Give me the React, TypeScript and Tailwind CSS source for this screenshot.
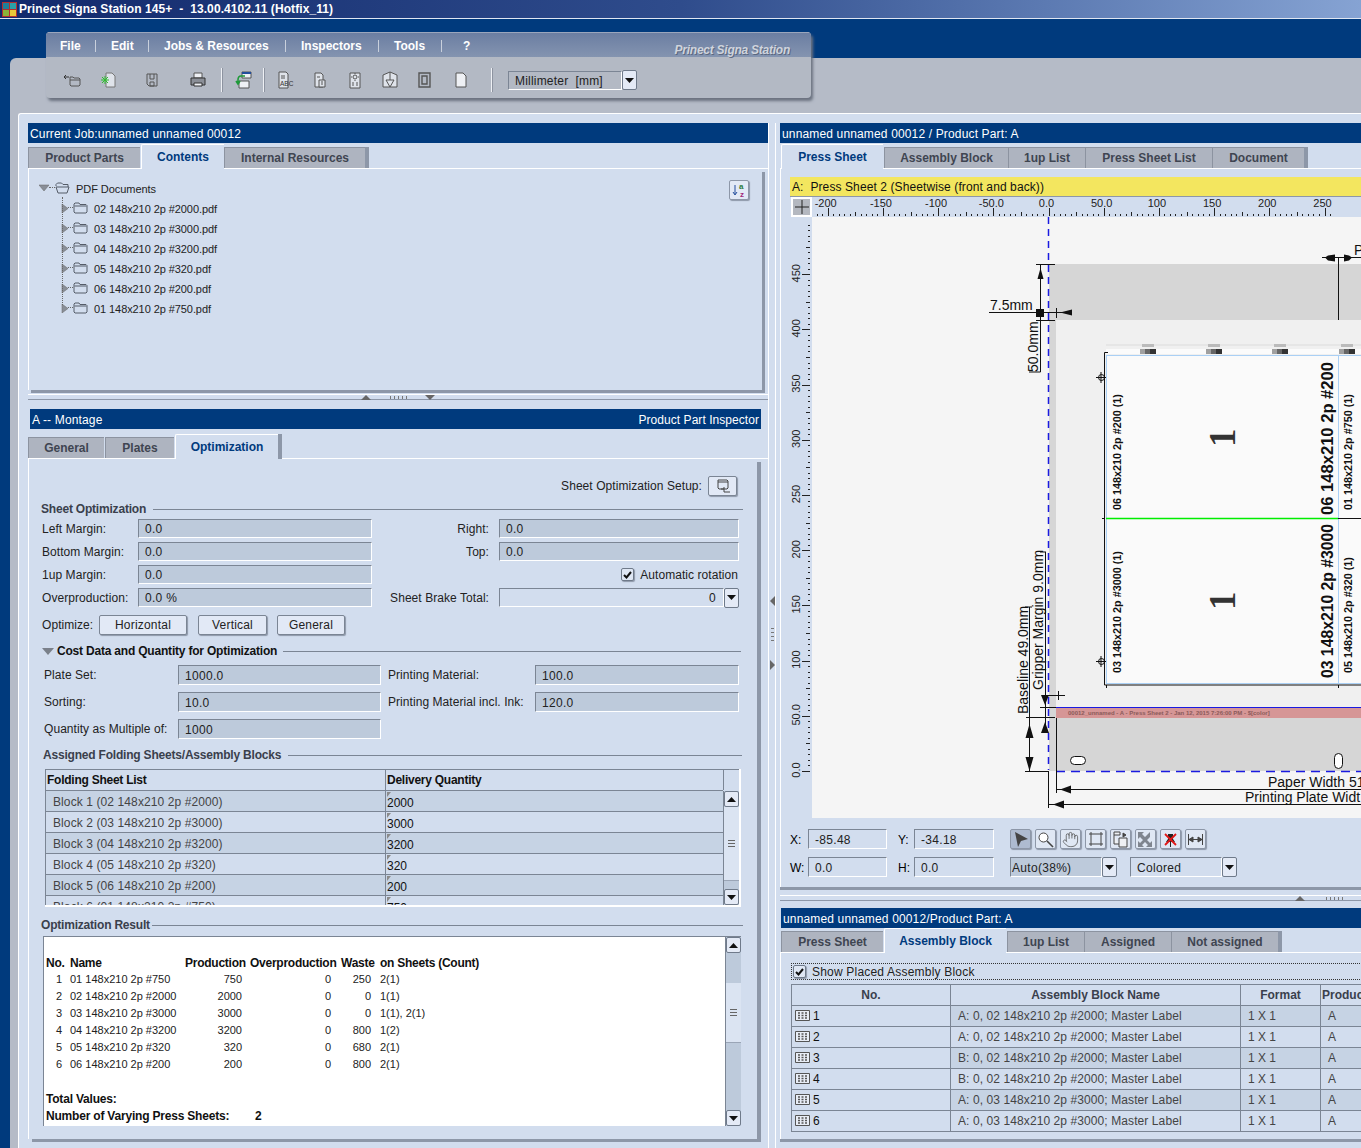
import { Hand } from "lucide-react";
import type { ReactNode } from "react";

const docs = [
  "02 148x210 2p #2000.pdf",
  "03 148x210 2p #3000.pdf",
  "04 148x210 2p #3200.pdf",
  "05 148x210 2p #320.pdf",
  "06 148x210 2p #200.pdf",
  "01 148x210 2p #750.pdf",
];

const blocks = [
  ["Block 1 (02 148x210 2p #2000)", "2000"],
  ["Block 2 (03 148x210 2p #3000)", "3000"],
  ["Block 3 (04 148x210 2p #3200)", "3200"],
  ["Block 4 (05 148x210 2p #320)", "320"],
  ["Block 5 (06 148x210 2p #200)", "200"],
  ["Block 6 (01 148x210 2p #750)", "750"],
];

const results = [
  ["1", "01 148x210 2p #750", "750", "0", "250", "2(1)"],
  ["2", "02 148x210 2p #2000", "2000", "0", "0", "1(1)"],
  ["3", "03 148x210 2p #3000", "3000", "0", "0", "1(1), 2(1)"],
  ["4", "04 148x210 2p #3200", "3200", "0", "800", "1(2)"],
  ["5", "05 148x210 2p #320", "320", "0", "680", "2(1)"],
  ["6", "06 148x210 2p #200", "200", "0", "800", "2(1)"],
];

const assembly = [
  ["1", "A: 0, 02 148x210 2p #2000; Master Label"],
  ["2", "A: 0, 02 148x210 2p #2000; Master Label"],
  ["3", "B: 0, 02 148x210 2p #2000; Master Label"],
  ["4", "B: 0, 02 148x210 2p #2000; Master Label"],
  ["5", "A: 0, 03 148x210 2p #3000; Master Label"],
  ["6", "A: 0, 03 148x210 2p #3000; Master Label"],
];

const Header = ({ className, children }: { className: string; children: ReactNode }) => (
  <div className={`h-[20px] pt-px bg-[#003a7d] text-white flex items-center justify-between px-[2px] tracking-[0.15px] ${className}`}>
    {children}
  </div>
);

const Tab = ({ label, active, last, className }: { label: string; active?: boolean; last?: boolean; className: string }) => (
  <div
    className={`shrink-0 flex items-center justify-center font-bold ${className} ${
      active
        ? "h-[25px] -mb-px bg-[#d2ddee] text-[#003a7d] border-t border-l border-white rounded-tl-[2px] relative z-10"
        : "h-[21px] bg-[#aeb4c0] text-[#3f4551] border-t border-l border-[#8c93a0]"
    } ${last ? "shadow-[4px_0_0_#8d97a8] mr-[4px]" : ""}`}
  >
    {label}
  </div>
);

const Field = ({ className, children }: { className: string; children?: ReactNode }) => (
  <div className={`h-[20px] pt-px flex items-center pl-[6px] bg-[#bdcadb] border border-t-[#7b8594] border-l-[#7b8594] border-r-white border-b-white tracking-[0.3px] text-[#222] ${className}`}>
    {children}
  </div>
);

const PlainField = ({ className, children }: { className: string; children?: ReactNode }) => (
  <div className={`h-[20px] pt-px flex items-center pl-[6px] border border-t-[#7b8594] border-l-[#7b8594] border-r-white border-b-white tracking-[0.3px] text-[#222] ${className}`}>
    {children}
  </div>
);

const DropBtn = () => (
  <div className="w-[15px] h-[20px] shrink-0 flex items-center justify-center bg-[#e4eaf6] border border-[#6f7a8a] rounded-[2px]">
    <svg width="9" height="5" viewBox="0 0 9 5">
      <path d="M0 0h9L4.5 5z" fill="#111" />
    </svg>
  </div>
);

const Btn = ({ className, children }: { className: string; children: ReactNode }) => (
  <div className={`h-[20px] flex items-center justify-center bg-[#e2e9f6] border border-[#7b8594] rounded-[2px] shadow-[1px_1px_1px_#8d97a8] tracking-[0.2px] text-[#222] ${className}`}>
    {children}
  </div>
);

const Check = () => (
  <div className="w-[13px] h-[13px] shrink-0 flex items-center justify-center bg-[#dfe7f4] border border-[#6f7a8a] rounded-[2px] shadow-[1px_1px_1px_#8d97a8]">
    <svg width="9" height="8" viewBox="0 0 9 8">
      <path d="M1 4l2.5 2.5L8 1" fill="none" stroke="#111" strokeWidth="2" />
    </svg>
  </div>
);

const Section = ({ className, line, children }: { className: string; line: string; children: ReactNode }) => (
  <div className={`h-[14px] flex items-center font-bold text-[#3a404c] tracking-[-0.2px] whitespace-nowrap ${className}`}>
    {children}
    <div className={`h-px bg-[#7b8594] ml-auto ${line}`} />
  </div>
);

const Folder = ({ open }: { open?: boolean }) => (
  <svg width="15" height="12" viewBox="0 0 15 12" className="shrink-0 -mt-[3px]">
    <path
      d={open ? "M1 4V2.5L2.5 1h4L8 2.5h5V5M1 5h10l3 0-2 6H3z" : "M1 3V2l1-1h4l1 1.5h6l1 1V10l-1 1H2l-1-1z"}
      fill="none"
      stroke="#555c68"
      strokeWidth="1"
    />
    {!open && <path d="M1.5 4h12" stroke="#555c68" strokeWidth="1" />}
  </svg>
);

const Tri = ({ dir }: { dir: "right" | "down" }) => (
  <svg width="10" height="9" viewBox="0 0 10 9" className="shrink-0 -mt-[2px]">
    <path d={dir === "down" ? "M0 1h10L5 7z" : "M1 0l6 4.5L1 9z"} fill="#8a8f98" stroke="#666" strokeWidth="0.5" />
  </svg>
);

const ToolIcon = ({ className, children }: { className: string; children: ReactNode }) => (
  <svg width="20" height="20" viewBox="0 0 20 20" className={`shrink-0 ${className}`} fill="none" stroke="#555" strokeWidth="1">
    {children}
  </svg>
);

const Sep = ({ className }: { className: string }) => <div className={`w-[2px] h-[24px] shrink-0 bg-[#eef0f4] border-r border-[#8d93a0] ${className}`} />;

const Toolbar = () => (
  <div className="absolute left-[46px] top-[32px] w-[765px] h-[66px] rounded-[4px] overflow-hidden shadow-[2px_3px_3px_#6b7280] bg-[#b3b9c4] z-20">
    <div className="relative h-[25px] pt-[2px] bg-gradient-to-b from-[#6b7ea2] to-[#8494b0] flex items-center text-white font-bold border-t border-[#9aa6bd]">
      <div className="w-[50px] pl-[14px] border-r border-[#c9d0dc]">File</div>
      <div className="w-[53px] pl-[15px] border-r border-[#c9d0dc]">Edit</div>
      <div className="w-[137px] pl-[15px] border-r border-[#c9d0dc]">Jobs &amp; Resources</div>
      <div className="w-[93px] pl-[15px] border-r border-[#c9d0dc]">Inspectors</div>
      <div className="w-[63px] pl-[15px] border-r border-[#c9d0dc]">Tools</div>
      <div className="pl-[21px]">?</div>
      <div className="ml-auto mr-[21px] mt-[8px] italic tracking-[-0.25px] text-[#cfd4dd] [text-shadow:1px_1px_0_#5b6880]">Prinect Signa Station</div>
    </div>
    <div className="h-[41px] flex items-center pt-[5px]">
      <ToolIcon className="ml-[16px]">
        <path d="M8 7h3l1 1h5l1 1v6l-1 1H9l-1-1zM8 10h10" />
        <path d="M2 7h5M2 7l2-2M2 7l2 2" stroke="#333" />
      </ToolIcon>
      <ToolIcon className="ml-[16px]">
        <path d="M8 3h6l3 3v11H8z" stroke="#777" fill="#dfe3ea" />
        <path d="M7 6v8M3 10h8M4 7l6 6M10 7l-6 6" stroke="#2fc02f" />
      </ToolIcon>
      <ToolIcon className="ml-[24px]">
        <path d="M5 4h10v12H7l-2-2zM8 4v5h4V4M8 12h4v4H8z" />
      </ToolIcon>
      <ToolIcon className="ml-[26px]">
        <path d="M6 3h8v5H6z" fill="#eef0f4" />
        <path d="M3 8h14v7H3z" fill="#8b8f97" stroke="#333" />
        <path d="M6 13h8v3H6z" fill="#eef0f4" stroke="#333" />
      </ToolIcon>
      <Sep className="ml-[13px]" />
      <ToolIcon className="ml-[11px]">
        <path d="M8 2h9v6H8z" fill="#eef0f4" />
        <path d="M8 3h9" stroke="#224d9c" strokeWidth="2" />
        <path d="M5 11h10v7H5z" fill="#eef0f4" />
        <path d="M11 6H7Q4 6 4 10v3M2 11l2 3 2-3" stroke="#1f9a3a" strokeWidth="1.6" />
      </ToolIcon>
      <Sep className="ml-[9px]" />
      <ToolIcon className="ml-[12px]">
        <path d="M2 2h7l2 2v14H2z" fill="#dfe3ea" />
        <path d="M4 6h4M4 8h4" />
        <text x="3" y="15.5" fontSize="6.5" stroke="none" fill="#333" fontFamily="Liberation Sans">ABC</text>
      </ToolIcon>
      <ToolIcon className="ml-[13px]">
        <path d="M5 3h6l2 2v12H5z" fill="#dfe3ea" />
        <path d="M7 7h3M9 10h6v7H9z" fill="#dfe3ea" />
        <path d="M11 12h2M11 14h2" />
      </ToolIcon>
      <ToolIcon className="ml-[15px]">
        <path d="M5 3h10v15H5z" fill="#dfe3ea" />
        <circle cx="10" cy="7" r="2" />
        <path d="M10 3v1M10 10v1M6 7h1M13 7h1M7 13h2M11 13h2M7 15h2M11 15h2" />
      </ToolIcon>
      <ToolIcon className="ml-[15px]">
        <path d="M3 5l7-3 7 3v12H3z" fill="#dfe3ea" />
        <path d="M10 2v8M6 10h8l-4 7z" />
      </ToolIcon>
      <ToolIcon className="ml-[15px]">
        <path d="M4 3h11v14H4zM7 6h5v8H7z" strokeWidth="1.4" />
      </ToolIcon>
      <ToolIcon className="ml-[16px]">
        <path d="M5 3h7l3 3v11H5z" fill="#eef0f4" />
      </ToolIcon>
      <Sep className="ml-[20px]" />
      <div className="ml-[15px] flex items-center">
        <Field className="w-[114px] !pl-[6px] !tracking-[0.2px] !h-[19px] !bg-[#b3b9c4]">Millimeter&nbsp; [mm]</Field>
        <DropBtn />
      </div>
    </div>
  </div>
);

const SortIcon = () => (
  <div className="absolute left-[700px] top-[11px] w-[20px] h-[20px] bg-[#e2e9f6] border border-[#8d97a8] rounded-[2px] shadow-[1px_1px_1px_#8d97a8]">
    <svg width="18" height="18" viewBox="0 0 18 18">
      <path d="M5 4v9M3 11l2 3 2-3" fill="none" stroke="#224d9c" />
      <text x="9" y="8" fontSize="8" fontWeight="bold" fill="#2c7a3c" fontFamily="Liberation Sans">a</text>
      <text x="10" y="16" fontSize="8" fontWeight="bold" fill="#a02a7a" fontFamily="Liberation Sans">z</text>
    </svg>
  </div>
);

const TreePanel = () => (
  <div className="relative h-[221px] w-[734px] bg-[#d2ddee] border-l border-white shadow-[3px_3px_0_#8d97a8]">
    <SortIcon />
    <div className="absolute left-[33px] top-[28px] w-0 h-[108px] border-l border-dotted border-[#666]" />
    <div className="pt-[10px] pl-[10px]">
      <div className="h-[20px] flex items-center">
        <Tri dir="down" />
        <span className="w-[6px] -mt-[3px] border-t border-dotted border-[#666]" />
        <Folder open />
        <span className="ml-[6px] text-[11px] tracking-[-0.05px] text-[#222]">PDF Documents</span>
      </div>
      {docs.map((d) => (
        <div key={d} className="h-[20px] flex items-center pl-[22px]">
          <Tri dir="right" />
          <span className="w-[5px] -ml-[3px] -mt-[3px] border-t border-dotted border-[#666]" />
          <Folder />
          <span className="ml-[6px] text-[11px] tracking-[-0.08px] text-[#222]">{d}</span>
        </div>
      ))}
    </div>
  </div>
);

const HSplit = ({ className, children }: { className: string; children: ReactNode }) => (
  <div className={`relative border-t border-white border-b border-b-[#8d97a8] ${className}`}>{children}</div>
);

const Grip = ({ className }: { className: string }) => <div className={`absolute h-[3px] border-l-[2px] border-r-[2px] bg-[repeating-linear-gradient(90deg,#777_0_1px,transparent_1px_4px)] border-transparent ${className}`} />;

const FormLabel = ({ className, children }: { className: string; children: ReactNode }) => (
  <div className={`tracking-[0.06px] text-[#222] whitespace-nowrap ${className}`}>{children}</div>
);

const SheetForm = () => (
  <div className="ml-[13px] grid grid-cols-[96px_234px_127px_240px] auto-rows-[19px] gap-y-[4px] mt-[3px] items-center">
    <FormLabel className="">Left Margin:</FormLabel>
    <Field className="!h-[19px]">0.0</Field>
    <FormLabel className="text-right pr-[10px]">Right:</FormLabel>
    <Field className="!h-[19px]">0.0</Field>
    <FormLabel className="">Bottom Margin:</FormLabel>
    <Field className="!h-[19px]">0.0</Field>
    <FormLabel className="text-right pr-[10px]">Top:</FormLabel>
    <Field className="!h-[19px]">0.0</Field>
    <FormLabel className="">1up Margin:</FormLabel>
    <Field className="!h-[19px]">0.0</Field>
    <div className="col-span-2 flex items-center justify-end gap-[6px] pr-[1px]">
      <Check />
      <FormLabel className="">Automatic rotation</FormLabel>
    </div>
    <FormLabel className="">Overproduction:</FormLabel>
    <Field className="!h-[19px]">0.0 %</Field>
    <FormLabel className="text-right pr-[10px]">Sheet Brake Total:</FormLabel>
    <div className="flex">
      <PlainField className="flex-1 !h-[19px] justify-end pr-[7px]">0</PlainField>
      <DropBtn />
    </div>
  </div>
);

const CostForm = () => (
  <div className="ml-[15px] mt-[7px] grid grid-cols-[134px_203px_7px_147px_204px] auto-rows-[20px] gap-y-[7px] items-center">
    <FormLabel className="">Plate Set:</FormLabel>
    <Field className="">1000.0</Field>
    <div />
    <FormLabel className="">Printing Material:</FormLabel>
    <Field className="">100.0</Field>
    <FormLabel className="">Sorting:</FormLabel>
    <Field className="">10.0</Field>
    <div />
    <FormLabel className="">Printing Material incl. Ink:</FormLabel>
    <Field className="">120.0</Field>
    <FormLabel className="">Quantity as Multiple of:</FormLabel>
    <Field className="">1000</Field>
  </div>
);

const ScrollBar = ({ thumb, rest }: { thumb: string; rest: string }) => (
  <div className="w-full h-full flex flex-col bg-[#bdcadb] border-l border-[#7b8594]">
    <div className="h-[16px] shrink-0 flex items-center justify-center bg-[#e4eaf6] border border-[#6f7a8a] rounded-[2px]">
      <svg width="9" height="5" viewBox="0 0 9 5"><path d="M4.5 0L9 5H0z" fill="#111" /></svg>
    </div>
    <div className={`shrink-0 flex flex-col items-center justify-center gap-[2px] bg-[#dbe4f2] border-b border-[#9aa5b6] ${thumb}`}>
      <div className="w-[7px] h-px bg-[#666]" />
      <div className="w-[7px] h-px bg-[#666]" />
      <div className="w-[7px] h-px bg-[#666]" />
    </div>
    <div className={rest} />
    <div className="h-[16px] shrink-0 flex items-center justify-center bg-[#e4eaf6] border border-[#6f7a8a] rounded-[2px]">
      <svg width="9" height="5" viewBox="0 0 9 5"><path d="M0 0h9L4.5 5z" fill="#111" /></svg>
    </div>
  </div>
);

const FoldingTable = () => (
  <div className="ml-[16px] mt-[7px] w-[696px] h-[138px] border-r-2 border-b-2 border-white flex overflow-hidden">
    <div className="w-[678px] shrink-0 border-l border-t border-[#7b8594]">
      <div className="h-[21px] grid grid-cols-[340px_338px] font-bold text-[#111] border-b border-[#7b8594] tracking-[-0.25px]">
        <div className="pl-[1px] flex items-center border-r border-[#7b8594]">Folding Sheet List</div>
        <div className="pl-[1px] flex items-center border-r border-[#7b8594]">Delivery Quantity</div>
      </div>
      {blocks.map(([name, qty], i) => (
        <div key={name} className={`h-[21px] grid grid-cols-[340px_338px] border-b border-[#7b8594] ${i % 2 === 0 ? "bg-[#c6d3e4]" : ""}`}>
          <div className="pl-[7px] pt-px flex items-center tracking-[0.1px] text-[#444] border-r border-[#7b8594]">{name}</div>
          <div className="relative pl-[1px] pt-[3px] flex items-center text-[#111] border-r border-[#7b8594]">
            <svg width="4" height="5" viewBox="0 0 4 5" className="absolute left-[1px] top-[1px]"><path d="M0 0h4L0 5z" fill="#8a8a8a" /></svg>
            {qty}
          </div>
        </div>
      ))}
    </div>
    <div className="flex-1 flex flex-col pt-[21px] border-t border-[#7b8594]">
      <ScrollBar thumb="h-[74px]" rest="flex-1" />
    </div>
  </div>
);

const ResultRowGrid = "grid grid-cols-[24px_115px_61px_90px_40px_1fr] h-[17px] items-center text-[#222] whitespace-nowrap";

const ResultBox = () => (
  <div className="ml-[14px] mt-[4px] w-[698px] h-[190px] bg-white border-l border-t border-[#7b8594] flex overflow-hidden">
    <div className="flex-1 pt-[17px] pl-[2px]">
      <div className={`${ResultRowGrid} font-bold !text-[#111] tracking-[-0.25px]`}>
        <div>No.</div>
        <div>Name</div>
        <div>Production</div>
        <div className="pl-[4px]">Overproduction</div>
        <div className="pl-[5px]">Waste</div>
        <div className="pl-[4px]">on Sheets (Count)</div>
      </div>
      {results.map((r) => (
        <div key={r[0]} className={`${ResultRowGrid} text-[11px]`}>
          <div className="text-right pr-[8px]">{r[0]}</div>
          <div>{r[1]}</div>
          <div className="text-right pr-[4px]">{r[2]}</div>
          <div className="text-right pr-[5px]">{r[3]}</div>
          <div className="text-right pr-[5px]">{r[4]}</div>
          <div className="pl-[4px]">{r[5]}</div>
        </div>
      ))}
      <div className="h-[17px]" />
      <div className="h-[17px] flex items-center font-bold text-[#111] tracking-[-0.2px]">Total Values:</div>
      <div className="h-[17px] flex items-center font-bold text-[#111] tracking-[-0.2px]">
        <span className="w-[209px]">Number of Varying Press Sheets:</span>
        <span>2</span>
      </div>
    </div>
    <div className="w-[16px] shrink-0">
      <ScrollBar thumb="h-[60px] mt-[30px]" rest="flex-1" />
    </div>
  </div>
);

const LeftColumn = () => (
  <div className="w-[740px] ml-[9px] shrink-0">
    <Header className="">
      <span>Current Job:unnamed unnamed 00012</span>
    </Header>
    <div className="h-[26px] flex items-end border-b border-white">
      <Tab label="Product Parts" className="w-[112px]" />
      <Tab label="Contents" active className="w-[83px] ml-px" />
      <Tab label="Internal Resources" last className="w-[141px]" />
    </div>
    <TreePanel />
    <HSplit className="h-[6px] mt-[4px]">
      <svg width="10" height="5" viewBox="0 0 10 5" className="absolute left-[333px] top-0"><path d="M5 0l5 5H0z" fill="#666" /></svg>
      <Grip className="left-[360px] top-[1px] w-[20px]" />
      <svg width="10" height="5" viewBox="0 0 10 5" className="absolute left-[397px] top-0"><path d="M0 0h10L5 5z" fill="#666" /></svg>
    </HSplit>
    <Header className="mt-[9px] ml-[2px] w-[731px]">
      <span>A -- Montage</span>
      <span className="tracking-[0.05px]">Product Part Inspector</span>
    </Header>
    <div className="h-[30px] flex items-end border-b border-white">
      <Tab label="General" className="w-[76px]" />
      <Tab label="Plates" className="w-[69px] ml-px" />
      <Tab label="Optimization" active last className="w-[103px] ml-px" />
    </div>
    <div className="w-[729px] h-[680px] bg-[#d2ddee] border-l border-white shadow-[4px_3px_0_#8d97a8]">
      <div className="mt-0 pt-[17px] h-[37px] flex items-center justify-end pr-[20px] gap-[6px]">
        <FormLabel className="">Sheet Optimization Setup:</FormLabel>
        <Btn className="w-[29px]">
          <svg width="18" height="16" viewBox="0 0 18 16" fill="none" stroke="#444">
            <path d="M4 2h9l1 1v7l-1 1H5l-1-1zM4 4h10M10 9v5M7 11h3M10 14h6" />
          </svg>
        </Btn>
      </div>
      <Section className="ml-[12px] mt-[6px] w-[702px]" line="w-[590px]">Sheet Optimization</Section>
      <SheetForm />
      <div className="ml-[13px] mt-[8px] h-[20px] flex items-center">
        <FormLabel className="w-[57px]">Optimize:</FormLabel>
        <Btn className="w-[88px]">Horizontal</Btn>
        <Btn className="w-[69px] ml-[11px]">Vertical</Btn>
        <Btn className="w-[68px] ml-[10px]">General</Btn>
      </div>
      <Section className="ml-[13px] mt-[9px] w-[699px] !text-[#111]" line="w-[458px]">
        <svg width="12" height="7" viewBox="0 0 12 7" className="mr-[3px]"><path d="M0 0h12L6 7z" fill="#7a808a" /></svg>
        Cost Data and Quantity for Optimization
      </Section>
      <CostForm />
      <Section className="ml-[14px] mt-[9px] w-[699px]" line="w-[454px]">Assigned Folding Sheets/Assembly Blocks</Section>
      <FoldingTable />
      <Section className="ml-[12px] mt-[11px] w-[702px]" line="w-[591px]">Optimization Result</Section>
      <ResultBox />
    </div>
  </div>
);

const VSplit = () => (
  <div className="relative w-[12px] shrink-0 border-l border-white">
    <svg width="5" height="10" viewBox="0 0 5 10" className="absolute left-[1px] top-[473px]"><path d="M5 0v10L0 5z" fill="#666" /></svg>
    <div className="absolute left-[2px] top-[502px] w-[3px] h-[16px] bg-[repeating-linear-gradient(0deg,#777_0_1px,transparent_1px_4px)]" />
    <svg width="5" height="10" viewBox="0 0 5 10" className="absolute left-[1px] top-[537px]"><path d="M0 0v10l5-5z" fill="#666" /></svg>
    <div className="absolute left-[6px] top-0 bottom-0 w-px bg-white" />
  </div>
);

const major = [-200, -150, -100, -50, 0, 50, 100, 150, 200, 250];
const hLabels = ["-200", "-150", "-100", "-50.0", "0.0", "50.0", "100", "150", "200", "250"];
const vLabels = ["0.0", "50.0", "100", "150", "200", "250", "300", "350", "400", "450"];
const hTicks = Array.from({ length: 100 }, (_, i) => i - 48);
const vTicks = Array.from({ length: 100 }, (_, i) => i);

const HRuler = () => (
  <svg width="549" height="20" viewBox="812 197 549 20" className="shrink-0 block">
    {hTicks.map((n) => {
      const x = Math.round(1048.5 + n * 5.52) + 0.5;
      const h = n % 10 === 0 ? 8 : n % 5 === 0 ? 4 : 2;
      return <line key={n} x1={x} x2={x} y1={216} y2={216 - h} stroke="#222" />;
    })}
    {major.map((m, i) => (
      <text key={m} x={1048.5 + m * 1.104 - 2} y={207} textAnchor="middle" fontSize="11" fill="#222" fontFamily="Liberation Sans">
        {hLabels[i]}
      </text>
    ))}
  </svg>
);

const VRuler = () => (
  <svg width="21" height="601" viewBox="791 217 21 601" className="shrink-0 block">
    {vTicks.map((n) => {
      const y = Math.round(771 - n * 5.52) + 0.5;
      const w = n % 10 === 0 ? 8 : n % 5 === 0 ? 4 : 2;
      return <line key={n} x1={810} x2={810 - w} y1={y} y2={y} stroke="#222" />;
    })}
    {vLabels.map((l, i) => {
      const y = 771 - i * 55.2 - 1;
      return (
        <text key={l} x={800} y={y} transform={`rotate(-90 800 ${y})`} textAnchor="middle" fontSize="11" fill="#222" fontFamily="Liberation Sans">
          {l}
        </text>
      );
    })}
  </svg>
);

const VText = ({ x, y, size, bold, fit, children }: { x: number; y: number; size: number; bold?: boolean; fit?: number; children: string }) => (
  <text
    x={x}
    y={y}
    transform={`rotate(-90 ${x} ${y})`}
    fontSize={size}
    fontWeight={bold ? "bold" : "normal"}
    fill="#111"
    stroke="none"
    fontFamily="Liberation Sans"
    textLength={fit}
    lengthAdjust={fit ? "spacingAndGlyphs" : undefined}
  >
    {children}
  </text>
);

const marks = [1140, 1206, 1272, 1339];

const Sheet = () => (
  <svg width="549" height="601" viewBox="812 217 549 601" className="shrink-0 block bg-[#f5f5f5]">
    {/* paper */}
    <rect x="1049" y="264" width="320" height="56" fill="#d6d6d6" />
    <rect x="1049" y="320" width="7" height="451" fill="#d6d6d6" />
    <rect x="1056" y="320" width="310" height="387" fill="#f0f0f0" />
    <rect x="1056" y="718" width="310" height="53" fill="#d6d6d6" />
    <rect x="1056" y="707" width="310" height="11" fill="#d69696" />
    <line x1="1056" x2="1361" y1="707.5" y2="707.5" stroke="#1a1ae0" />
    <text x="1068" y="715" fontSize="6" fill="#8a5a5a" fontFamily="Liberation Sans" fontWeight="bold">00012_unnamed - A  - Press Sheet 2 - Jan 12, 2015 7:26:00 PM - $[color]</text>
    {/* color bar */}
    <rect x="1106" y="349" width="255" height="5" fill="#fbfbfb" />
    <rect x="1106" y="344" width="255" height="2" fill="#e6e6e6" />
    {marks.map((x) => (
      <g key={x}>
        <rect x={x} y="349" width="6" height="5" fill="#a0a0a0" />
        <rect x={x + 5} y="349" width="6" height="5" fill="#666" />
        <rect x={x + 10} y="349" width="6" height="5" fill="#333" />
        <rect x={x + 2} y="344" width="12" height="3" fill="#bbb" />
      </g>
    ))}
    {/* 1ups */}
    <rect x="1106.5" y="355.5" width="270" height="328" fill="#fafafa" stroke="#aad0f5" />
    <line x1="1338.5" x2="1338.5" y1="355" y2="683" stroke="#aad0f5" />
    <line x1="1106" x2="1338" y1="518.5" y2="518.5" stroke="#00ee00" strokeWidth="1.4" />
    <line x1="1338" x2="1361" y1="518.5" y2="518.5" stroke="#111" />
    <path d="M1108 352.5h-3.5v332.5H1361M1102 518.5h3M1106.5 685v3M1338.5 685v3" fill="none" stroke="#111" />
    <path d="M1096 377.5h10M1101 372v11M1096 661.5h10M1101 656v11" stroke="#111" fill="none" />
    <circle cx="1101.5" cy="377.5" r="3" fill="none" stroke="#111" />
    <circle cx="1101.5" cy="661.5" r="3" fill="none" stroke="#111" />
    <VText x={1121} y={510} size={10.8} bold>06 148x210 2p #200 (1)</VText>
    <VText x={1121} y={673} size={10.8} bold>03 148x210 2p #3000 (1)</VText>
    <VText x={1333} y={515} size={17} bold fit={153}>06 148x210 2p #200</VText>
    <VText x={1333} y={678} size={17} bold fit={154}>03 148x210 2p #3000</VText>
    <VText x={1352} y={510} size={10.8} bold>01 148x210 2p #750 (1)</VText>
    <VText x={1352} y={673} size={10.8} bold>05 148x210 2p #320 (1)</VText>
    <text x={1235} y={447} transform="rotate(-90 1235 447)" fontSize="37" fontWeight="bold" fill="#333" fontFamily="Liberation Serif">1</text>
    <text x={1235} y={610} transform="rotate(-90 1235 610)" fontSize="37" fontWeight="bold" fill="#333" fontFamily="Liberation Serif">1</text>
    {/* slots */}
    <rect x="1070.5" y="756.5" width="15" height="8" rx="4" fill="#fff" stroke="#111" />
    <rect x="1334.5" y="753.5" width="8" height="15" rx="4" fill="#fff" stroke="#111" />
    {/* dashed guides */}
    <line x1="1048.5" x2="1048.5" y1="217" y2="770" stroke="#1a1ae0" strokeWidth="1.5" strokeDasharray="7 5" />
    <line x1="1056" x2="1361" y1="771.5" y2="771.5" stroke="#1a1ae0" strokeWidth="1.5" strokeDasharray="9 6" />
    {/* dimensions */}
    <g stroke="#111" fill="none" strokeWidth="1">
      <path d="M1036 264.5h19M1036 320.5h19M1040.5 264v108M1029 372h11.5" />
      <path d="M989 312.5h50M1044 312.5h28M1056.5 308v10" />
      <path d="M1338.5 257v63M1322 257.5h39" />
      <path d="M1029.5 607v164M1025 607h7M1026 717.5h29M1025 771.5h24" />
      <path d="M1045.5 552v181M1040 552h6M1040 707.5h16M1048 695.5h17M1058.5 691v9" />
      <path d="M1056.5 718v75M1056 789.5h305M1048.5 772v36M1048 804.5h313" />
    </g>
    <g fill="#111">
      <path d="M1040.5 268l3 11h-6z" />
      <rect x="1036" y="309" width="8" height="8" />
      <path d="M1060 312.5l12-3v6z" />
      <path d="M1325 257.5l3-2 7-1v7l-7-1zM1352 257.5l-3-2-5-1v7l5-1z" />
      <path d="M1029.5 724l4 14h-8zM1029.5 771l4-14h-8z" />
      <path d="M1045 705l-4-10h8zM1045 722l4 11h-8z" />
      <path d="M1060 789.5l11-4v8zM1053 804.5l11-4v8z" />
    </g>
    <text x="990" y="310" fontSize="14" fill="#111" fontFamily="Liberation Sans">7.5mm</text>
    <VText x={1038} y={372} size={14}>50.0mm</VText>
    <VText x={1028} y={714} size={14}>Baseline 49.0mm</VText>
    <VText x={1043} y={690} size={14}>Gripper Margin 9.0mm</VText>
    <text x="1268" y="787" fontSize="14" fill="#111" fontFamily="Liberation Sans">Paper Width 51</text>
    <text x="1245" y="802" fontSize="14" fill="#111" fontFamily="Liberation Sans">Printing Plate Widt</text>
    <text x="1354" y="255" fontSize="14" fill="#111" fontFamily="Liberation Sans">P</text>
  </svg>
);

const ToolBtn = ({ active, children }: { active?: boolean; children: ReactNode }) => (
  <div className={`w-[21px] h-[20px] shrink-0 flex items-center justify-center border border-[#8d97a8] rounded-[2px] shadow-[1px_1px_1px_#8d97a8] ${active ? "bg-[#aebbd0]" : "bg-[#dfe7f4]"}`}>
    {children}
  </div>
);

const CanvasTools = () => (
  <div className="ml-[16px] flex gap-[4px]">
    <ToolBtn active>
      <svg width="16" height="16" viewBox="0 0 16 16"><path d="M2 1l13 7-7 2-3 6z" fill="#444" /></svg>
    </ToolBtn>
    <ToolBtn>
      <svg width="17" height="17" viewBox="0 0 17 17" fill="none" stroke="#444"><circle cx="6.5" cy="6.5" r="4.5" fill="#fff" /><path d="M10 10l6 6" strokeWidth="1.6" /></svg>
    </ToolBtn>
    <ToolBtn>
      <Hand size={17} strokeWidth={1} color="#444" />
    </ToolBtn>
    <ToolBtn>
      <svg width="16" height="16" viewBox="0 0 16 16" fill="none" stroke="#444"><path d="M3 1v14M13 1v14M1 3h14M1 13h14" /></svg>
    </ToolBtn>
    <ToolBtn>
      <svg width="17" height="17" viewBox="0 0 17 17" fill="none" stroke="#444"><path d="M2 1h6v3h-6zM2 4v9h5M7 7h8v9H7z" fill="#eef0f4" /><path d="M11 2l3 2-3 2z" fill="#444" /></svg>
    </ToolBtn>
    <ToolBtn>
      <svg width="17" height="17" viewBox="0 0 17 17"><path d="M1 1h6l-2 2 3 3 3-3 2-2v5l-3 3 3 3 2-2v6h-6l2-2-3-3-3 3 2 2H1v-6l2 2 3-3-3-3-2 2z" fill="#7f858f" /></svg>
    </ToolBtn>
    <ToolBtn>
      <svg width="17" height="17" viewBox="0 0 17 17"><path d="M6 3h5v5l2 3H4l2-3zM8 11h1v5H8z" fill="#222" /><path d="M3 3l11 11M14 3L3 14" stroke="#e01818" strokeWidth="1.8" /></svg>
    </ToolBtn>
    <ToolBtn>
      <svg width="17" height="15" viewBox="0 0 17 15" fill="none" stroke="#444"><path d="M1.5 2v11M15.5 2v11M2 7.5h13" /><path d="M2 7.5l4-2.5v5zM15 7.5l-4-2.5v5z" fill="#444" /></svg>
    </ToolBtn>
  </div>
);

const PressPanel = () => (
  <div className="relative h-[718px] w-[590px] bg-[#d2ddee] border-l border-white shadow-[0_3px_0_#8d97a8]">
    <div className="ml-[9px] pt-[8px]">
      <div className="h-[19px] pt-px bg-[#f3e65f] flex items-center pl-[2px] tracking-[0.1px] text-[#111]">A:&nbsp; Press Sheet 2 (Sheetwise (front and back))</div>
      <div className="flex h-[21px] border-t border-[#8d97a8] pl-px">
        <div className="w-[21px] h-[20px] shrink-0 border-2 border-white bg-[#b4b8c0] flex items-center justify-center">
          <svg width="14" height="14" viewBox="0 0 14 14"><path d="M7 0v14M0 7h14" stroke="#222" /></svg>
        </div>
        <HRuler />
      </div>
      <div className="flex h-[601px] pl-px">
        <VRuler />
        <Sheet />
      </div>
    </div>
    <div className="ml-[9px] mt-[11px] flex items-center h-[20px]">
      <span className="w-[18px] pt-px">X:</span>
      <PlainField className="w-[79px]">-85.48</PlainField>
      <span className="ml-[11px] w-[16px] pt-px">Y:</span>
      <PlainField className="w-[80px]">-34.18</PlainField>
      <CanvasTools />
    </div>
    <div className="ml-[9px] mt-[8px] flex items-center h-[20px]">
      <span className="w-[18px] pt-px">W:</span>
      <PlainField className="w-[79px]">0.0</PlainField>
      <span className="ml-[11px] w-[16px] pt-px">H:</span>
      <PlainField className="w-[80px]">0.0</PlainField>
      <div className="ml-[16px] flex">
        <Field className="w-[92px] !pl-px">Auto(38%)</Field>
        <DropBtn />
      </div>
      <div className="ml-[13px] flex">
        <PlainField className="w-[92px]">Colored</PlainField>
        <DropBtn />
      </div>
    </div>
  </div>
);

const AssemblyPanel = () => (
  <div className="h-[186px] w-[590px] bg-[#d2ddee] border-l border-white shadow-[0_3px_0_#8d97a8] pl-[10px] pt-[10px]">
    <div className="h-[17px] flex items-center gap-[6px] pl-[1px] border-y border-l border-dotted border-[#333] tracking-[0.2px] text-[#222]">
      <Check />
      <span>Show Placed Assembly Block</span>
    </div>
    <div className="mt-[4px] border-t border-l border-[#7b8594] w-[600px]">
      <div className="h-[21px] grid grid-cols-[159px_290px_80px_71px] font-bold text-[#3a404c] border-b border-[#7b8594]">
        <div className="flex items-center justify-center border-r border-[#7b8594]">No.</div>
        <div className="flex items-center justify-center border-r border-[#7b8594]">Assembly Block Name</div>
        <div className="flex items-center justify-center border-r border-[#7b8594]">Format</div>
        <div className="flex items-center pl-px">Product</div>
      </div>
      {assembly.map(([n, name], i) => (
        <div key={n} className="h-[21px] grid grid-cols-[159px_290px_80px_71px] border-b border-[#7b8594]">
          <div className="flex items-center gap-[3px] pl-[3px] text-[#111] border-r border-[#7b8594]">
            <svg width="15" height="11" viewBox="0 0 15 11" fill="none" stroke="#555" className="-mt-px">
              <path d="M.5.5h14v10H.5z" fill="#e8edf6" />
              <path d="M3 3h2M6.5 3h2M10 3h2M3 5.5h2M6.5 5.5h2M10 5.5h2M3 8h2M6.5 8h2M10 8h2" strokeWidth="1.4" />
            </svg>
            {n}
          </div>
          <div className={`flex items-center pl-[7px] tracking-[0.09px] text-[#444] border-r border-[#7b8594] ${i % 2 === 0 ? "bg-[#c6d3e4]" : ""}`}>{name}</div>
          <div className={`flex items-center pl-[7px] text-[#444] border-r border-[#7b8594] ${i % 2 === 0 ? "bg-[#c6d3e4]" : ""}`}>1 X 1</div>
          <div className={`flex items-center pl-[7px] text-[#444] ${i % 2 === 0 ? "bg-[#c6d3e4]" : ""}`}>A</div>
        </div>
      ))}
    </div>
  </div>
);

const RightColumn = () => (
  <div className="w-[590px] shrink-0">
    <Header className="">
      <span>unnamed unnamed 00012 / Product Part: A</span>
    </Header>
    <div className="h-[26px] flex items-end border-b border-white">
      <Tab label="Press Sheet" active className="w-[102px] ml-px" />
      <Tab label="Assembly Block" className="w-[124px] ml-px" />
      <Tab label="1up List" className="w-[77px]" />
      <Tab label="Press Sheet List" className="w-[127px]" />
      <Tab label="Document" last className="w-[92px]" />
    </div>
    <PressPanel />
    <HSplit className="h-[6px] mt-[8px]">
      <svg width="10" height="5" viewBox="0 0 10 5" className="absolute left-[515px] top-0"><path d="M5 0l5 5H0z" fill="#666" /></svg>
      <Grip className="left-[544px] top-[1px] w-[20px]" />
    </HSplit>
    <Header className="mt-[7px] ml-px">
      <span>unnamed unnamed 00012/Product Part: A</span>
    </Header>
    <div className="h-[25px] flex items-end border-b border-white">
      <Tab label="Press Sheet" className="w-[102px] ml-px" />
      <Tab label="Assembly Block" active className="w-[122px] ml-px" />
      <Tab label="1up List" className="w-[77px] ml-px" />
      <Tab label="Assigned" className="w-[87px]" />
      <Tab label="Not assigned" last className="w-[107px]" />
    </div>
    <AssemblyPanel />
  </div>
);

export default function App() {
  return (
    <div className="relative w-[1361px] h-[1148px] overflow-hidden bg-[#003a7d] font-['Liberation_Sans',Arial,sans-serif] text-[12px] leading-none">
      <div className="h-[19px] bg-gradient-to-r from-[#12296c] via-[#2f4c8c] to-[#86a3d3] border-b border-[#dfe6f2] flex items-center pl-[2px] text-white font-bold tracking-[0.09px]">
        <svg width="15" height="15" viewBox="0 0 15 15" className="mr-[2px]">
          <rect width="15" height="15" fill="#b03030" />
          <rect x="1" y="1" width="6" height="6" fill="#1e7f9a" />
          <rect x="8" y="1" width="6" height="6" fill="#2aa0a8" />
          <rect x="1" y="8" width="6" height="6" fill="#8ab43a" />
          <rect x="8" y="8" width="6" height="6" fill="#e8c83a" />
        </svg>
        Prinect Signa Station 145+&nbsp; -&nbsp; 13.00.4102.11 (Hotfix_11)
      </div>
      <Toolbar />
      <div className="ml-[10px] mt-[39px] h-[1090px] bg-[#b5bbc7] rounded-tl-[6px] pt-[55px] pl-[8px] overflow-hidden">
        <div className="w-[1343px] h-[1035px] bg-[#d2ddee] border-t border-l border-white rounded-tl-[3px] pt-[9px] flex">
          <LeftColumn />
          <VSplit />
          <RightColumn />
        </div>
      </div>
    </div>
  );
}
